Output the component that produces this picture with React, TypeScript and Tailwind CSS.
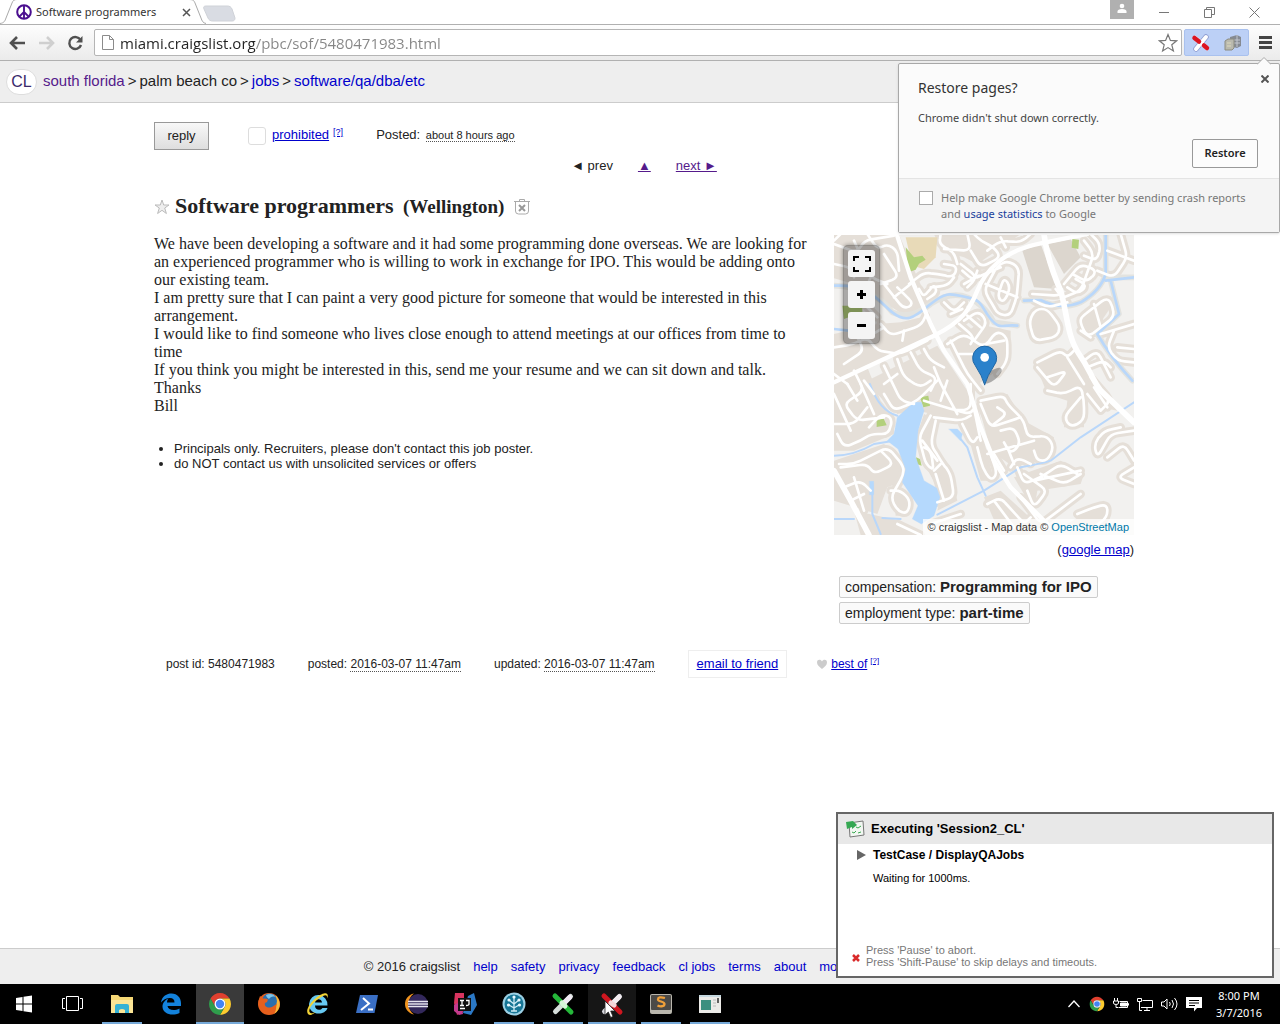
import type { ReactNode } from "react";

const link = "text-[#0000cc]";

/* ---------- browser chrome ---------- */

function PeaceIcon() {
  return (
    <svg viewBox="0 0 16 16" className="size-4 shrink-0" aria-hidden="true">
      <circle cx="8" cy="8" r="6.8" fill="#fff" stroke="#4b0f8f" strokeWidth="2" />
      <path d="M8 1v14M8 8 3.3 12.7M8 8l4.700 4.700" fill="none" stroke="#4b0f8f" strokeWidth="1.900" />
    </svg>
  );
}

function TabStrip() {
  return (
    <div className="flex h-6 items-end justify-between bg-white">
      <div className="flex">
        <div className="relative z-10 flex h-[25px] w-[206px] items-center gap-1 pt-px pr-3 pl-4">
          <svg viewBox="0 0 206 25" preserveAspectRatio="none" className="absolute inset-0 size-full" aria-hidden="true">
            <path d="M0 24.500C4 24 5 22 6 19L12 4C13 1.500 14 .5 17 .5H189C193 .5 194 1.500 195 4L201 19C202 22 203 24 206 24.500" fill="#fff" stroke="#a9a9a9" />
          </svg>
          <div className="relative flex w-full items-center gap-1">
            <PeaceIcon />
            <span className="flex-1 font-['Noto_Sans'] text-[11px] leading-4 whitespace-nowrap text-[#333]">Software programmers</span>
            <button type="button" aria-label="Close tab" className="mr-[3px] text-[#555]">
              <svg viewBox="0 0 9 9" className="size-[9px]"><path d="m1 1 7 7M8 1 1 8" stroke="currentColor" strokeWidth="1.500" /></svg>
            </button>
          </div>
        </div>
        <button type="button" aria-label="New tab" className="mt-1 -ml-1">
          <svg viewBox="0 0 34 17" className="h-[17px] w-[34px]"><path d="M4 1h21c3 0 4 1 5 3l3 9c0 2-1 3-3 3H11c-3 0-4-1-5-3L2 4c-1-2 0-3 2-3Z" fill="#d9dce3" stroke="#cfd2d8" /></svg>
        </button>
      </div>
      <div className="flex h-full items-start text-[#777]">
        <button type="button" aria-label="User" className="mr-[25px] flex h-[19px] w-6 justify-center bg-[#b0b0b0] pt-[3px]">
          <svg viewBox="0 0 12 11" className="h-[11px] w-3" fill="#fff"><circle cx="6" cy="3" r="2.300" /><path d="M1.500 10V8.500Q1.500 6 6 6t4.500 2.500V10Z" /></svg>
        </button>
        <button type="button" aria-label="Minimize" className="mt-[7px] mr-[34px]">
          <svg viewBox="0 0 11 11" className="size-[11px]"><path d="M0 5.500h10" stroke="currentColor" /></svg>
        </button>
        <button type="button" aria-label="Restore window" className="mt-[7px] mr-[34px]">
          <svg viewBox="0 0 11 11" className="size-[11px]" fill="none" stroke="currentColor"><path d="M.5 2.500h7v8h-7zM2.500 2.500v-2h8v7h-3" /></svg>
        </button>
        <button type="button" aria-label="Close window" className="mt-[7px] mr-5">
          <svg viewBox="0 0 11 11" className="size-[11px]"><path d="m.5.5 10 10M10.500.5l-10 10" stroke="currentColor" /></svg>
        </button>
      </div>
    </div>
  );
}

function Toolbar() {
  return (
    <div className="flex h-[37px] items-center border-t border-b border-[#b0b0b0] bg-linear-to-b from-[#fdfdfd] to-[#ebebeb] pr-2 pl-[9px]">
      <button type="button" aria-label="Back" className="mr-3">
        <svg viewBox="0 0 17 16" className="h-4 w-[17px]" fill="none" stroke="#505050" strokeWidth="2.600"><path d="M8 2 2 8l6 6M2 8h14" /></svg>
      </button>
      <button type="button" aria-label="Forward" className="mr-3">
        <svg viewBox="0 0 17 16" className="h-4 w-[17px]" fill="none" stroke="#cfcfcf" strokeWidth="2.600"><path d="m9 2 6 6-6 6M15 8H1" /></svg>
      </button>
      <button type="button" aria-label="Reload" className="mr-2.5">
        <svg viewBox="0 0 17 16" className="h-4 w-[17px]"><path d="M13.500 5A6 6 0 1 0 14 10" fill="none" stroke="#505050" strokeWidth="2.400" /><path d="M15.500 1v6.500H9Z" fill="#505050" /></svg>
      </button>
      <div className="flex h-[27px] flex-1 items-center rounded-[2px] border border-[#b5b5b5] bg-white pr-[3px] pl-[7px]">
        <svg viewBox="0 0 12 15" className="mr-[6px] h-[15px] w-3 shrink-0" fill="#fff" stroke="#8b8b8b"><path d="M.5.5h7l4 4v10H.5ZM7.500.5v4h4" /></svg>
        <input
          aria-label="Address"
          defaultValue="miami.craigslist.org/pbc/sof/5480471983.html"
          className="min-w-0 flex-1 bg-[linear-gradient(90deg,#222_0_136px,#858585_136px)] bg-clip-text font-['Open_Sans'] text-[15px] leading-6 text-transparent outline-none"
        />
        <button type="button" aria-label="Bookmark">
          <svg viewBox="0 0 20 20" className="size-5" fill="#fff" stroke="#777" strokeWidth="1.200"><path d="m10 1.500 2.400 5.900 6.200.4-4.800 4 1.600 6.200L10 14.600 4.600 18l1.600-6.200-4.800-4 6.200-.4Z" /></svg>
        </button>
      </div>
      <div className="ml-0.5 flex h-[27px] w-[65px] items-center justify-between rounded-[2px] border border-[#a9c1ee] bg-[#bcd0f6] px-[6px]">
        <button type="button" aria-label="Red test extension">
          <svg viewBox="0 0 20 18" className="h-[18px] w-5" strokeLinecap="round"><path d="m15 3-5 6-5 6" stroke="#8d9bd0" strokeWidth="5.500" fill="none" /><path d="m15 3-10 12" stroke="#fff" strokeWidth="4" /><path d="m4 4 12 10" stroke="#fff" strokeWidth="4.500" /><path d="m3.500 4 4.500 3.600M13 11.500l3 2.500" stroke="#dc1420" strokeWidth="4.500" /></svg>
        </button>
        <button type="button" aria-label="Page extension">
          <svg viewBox="0 0 18 18" className="size-[18px]"><path d="m6 3 7-2 4 2v9l-4 2-7-2Z" fill="#858a92" /><path d="M7 6h9M7 9h9M13 1v12" stroke="#c3c7cf" /><path d="m1 7 3-2h6v9l-2 2H1Z" fill="#b9b9ae" stroke="#8c8c80" /><path d="M3 9h4M3 12h4" stroke="#ddd9bd" /></svg>
        </button>
      </div>
      <button type="button" aria-label="Menu" className="ml-2.5">
        <svg viewBox="0 0 13 13" className="size-[13px]" stroke="#444" strokeWidth="3"><path d="M0 1.500h13M0 6.500h13M0 11.500h13" /></svg>
      </button>
    </div>
  );
}

function RestoreBubble() {
  return (
    <section aria-label="Restore pages" className="absolute top-[63px] right-0 z-20 w-[382px] rounded-[2px] border border-[#a8a8a8] bg-[#fbfbfb] font-['Noto_Sans'] shadow-sm">
      <svg viewBox="0 0 14 8" className="absolute -top-[7px] right-2 h-2 w-3.5"><path d="m0 7.500 7-7 7 7" fill="#fbfbfb" stroke="#a8a8a8" /></svg>
      <button type="button" aria-label="Dismiss" className="absolute top-[11px] right-2.5">
        <svg viewBox="0 0 8 8" className="size-2"><path d="m.5.5 7 7M7.500.5l-7 7" stroke="#555" strokeWidth="2" /></svg>
      </button>
      <div className="flex flex-col px-[19px] pt-3.5 pb-2.5">
        <h2 className="text-[14px] leading-5 text-[#333]">Restore pages?</h2>
        <p className="mt-3 text-[11px] leading-4 text-[#444]">Chrome didn't shut down correctly.</p>
        <button type="button" className="mt-[13px] mr-0.5 h-[29px] w-[66px] self-end rounded-[2px] border border-[#999] bg-[#fcfcfc] text-[11px] font-semibold text-[#222]">Restore</button>
      </div>
      <div className="flex items-start gap-2 border-t border-[#e4e4e4] bg-[#f4f4f4] px-5 pt-[11px] pb-[10px] text-[11px] leading-4 text-[#777]">
        <input id="crash" type="checkbox" className="mt-px size-3.5 shrink-0 appearance-none border border-[#aaa] bg-white" />
        <label htmlFor="crash" className="whitespace-nowrap">
          Help make Google Chrome better by sending crash reports
          <br />
          and <a href="#stats" className="text-[#1a3f9c]">usage statistics</a> to Google
        </label>
      </div>
    </section>
  );
}

/* ---------- map ---------- */

const residential = [
  "M-10 40V130L60 150L190 230L215 250L285 205L250 130L190 -10H0Z",
  "M300 0H560L430 90L390 70L320 50Z",
  "M0 300L130 270L200 265L280 245L310 300L0 440Z",
  "M100 440L310 335L400 470L450 620L480 740L440 740L390 560L250 530L190 540L120 470Z",
  "M0 430L100 400L140 500L180 550V600L60 650L0 650Z",
  "M0 680L150 630L210 680L215 740L160 760L130 840L0 800Z",
  "M175 750L230 820L220 845H185Z",
  "M270 540L310 560L290 620L350 700L370 800L310 830L320 780L260 670L250 600Z",
  "M350 330L430 270L530 290V380L420 460L380 400Z",
  "M430 500L520 480L570 560L660 610L650 670L540 700L470 650Z",
  "M590 225L640 225L680 290L660 320L600 325Z",
  "M600 380L720 345L800 460L850 530L800 520L750 490V580H690L700 500L640 480Z",
  "M740 250L830 185L830 220L790 280L740 300Z",
  "M450 790L500 770L620 880L580 903H500Z",
  "M540 730L680 680L750 720L740 750L610 770L600 830Z",
  "M60 830L200 860L260 903H80Z",
  "M700 870L810 800L830 840L790 880Z",
];

const streets = [
  "M0 30 70 55 90 20 180 5M100 0 130 45 160 30 190 50 195 110M20 0 0 20M60 20 110 130 160 150M0 90 50 100 60 130M110 130 80 200 130 250M150 60 195 130 140 150M190 160 240 210 210 225 150 150M230 150 180 190",
  "M320 0 315 30 360 55 370 90M330 45 410 50 400 0M410 50 440 100 500 70 480 40 440 20 420 0M460 50 500 20 560 25 590 0M500 10 515 40",
  "M225 150 270 115 310 120 360 130 370 95 330 90M255 165 270 190 300 150 310 175 280 195M290 160 340 155 360 130",
  "M385 110 420 140 430 110M380 90 430 130 400 160M390 150 435 125M330 205 360 235 390 205M350 240 385 225",
  "M490 95 450 170 475 210 490 240 530 245 550 180 555 100 520 80ZM510 130 490 190 510 205 530 160ZM455 150 550 190M430 130 500 100",
  "M595 180 680 185 665 165M600 200 640 220 700 205M690 190 740 170 780 60 750 20M700 160 730 180 760 155 725 135M715 120 760 145 790 110 740 90 690 150M750 65 790 80 800 30 770 0M790 110 840 130 880 70 860 0M820 50 900 80",
  "M605 225 585 260 600 320 665 310 680 280 640 225ZM740 250 820 190 835 215 840 250 760 310 740 270ZM780 210 800 280M740 290 770 310",
  "M800 300 900 270M840 290 820 340 850 380 900 385M850 340 900 345",
  "M0 340 60 330 100 310 130 350 200 360 280 320M30 390 90 350 60 290M140 270 170 305 260 275 275 245M210 290 205 320M100 310 150 280M0 420 40 450M60 410 90 470 30 510 70 560 150 550M90 440 120 480M0 570 60 570 100 520M10 600 30 640 80 620 110 600 165 600 175 550 140 540 105 580",
  "M150 395 200 500 240 510M190 375 210 430 260 460 290 440M230 355 260 410 310 430 290 470M270 345 290 380 330 400M150 450 190 420M300 400 320 450 370 540M150 480 180 530 250 500 310 440M270 500 370 530 410 525 410 450M320 500 340 440",
  "M350 320 400 420 440 470M375 270 420 310 410 330M390 260 435 230 460 265 420 320M400 245 440 280M340 330 390 300 450 340 490 290 520 310 520 380 490 420M455 330 510 320M370 360 430 360",
  "M370 530 410 540 420 520 440 620M300 550 380 560 410 545M385 570 415 630 430 610M440 500 510 485 520 510 570 560 580 610 640 605 660 640 640 680 610 680 600 650M440 510 470 580 560 550M490 520 520 540 480 570M500 590 540 580 560 630 530 660 510 625M460 660 600 620M530 700 550 670 590 690M520 640 540 690",
  "M430 640 445 700 470 740 490 720 470 660M480 660 510 710",
  "M290 545 255 610 275 690 300 710 290 650 270 640M305 560 290 630 320 680 350 720 360 790 310 805M265 620 310 680M300 710 320 690M305 720 330 800",
  "M15 690 60 690 160 640 205 690 210 720 170 790 190 830 220 840 230 800 200 770 170 770M20 700 100 690 120 720 180 690 140 650M60 730 90 830M30 760 80 740 110 770M50 800 90 780",
  "M0 480 50 590M80 450 120 540M40 450 70 500",
  "M610 385 680 350 700 370 720 350M610 400 660 460 700 410 640 430M700 370 750 450M750 380 790 350 830 430M760 400 810 380 830 400",
  "M640 470 690 480 740 455 750 500 750 560 710 580 690 550 740 490M760 480 800 530M780 460 820 520M800 530 830 500 770 430",
  "M900 590 830 600 790 670 780 630 810 590 860 580M820 670 870 630 900 680M900 700 850 730 900 750",
  "M460 810 500 790 570 870 590 850M480 800 540 880M550 700 570 750 620 730 680 690 730 720M570 720 640 770 600 820 580 770M620 720 690 750 740 720M600 740 740 710M560 790 620 870 740 780",
  "M730 840 780 820 820 810 820 850 780 880M190 870 260 903M290 870 380 840",
];

type Point = [number, number];

/* Moves from one point towards another, at most half of the way. */
function towards([ax, ay]: Point, [bx, by]: Point, distance: number): Point {
  const length = Math.hypot(bx - ax, by - ay) || 1;
  const t = Math.min(distance / length, 0.5);
  return [Math.round(ax + (bx - ax) * t), Math.round(ay + (by - ay) * t)];
}

/* Turns "M x y x y ..." polylines into paths with rounded bends. */
function rounded(path: string, radius = 22): string {
  return path
    .split("M")
    .filter(Boolean)
    .map((part) => {
      const closed = part.endsWith("Z");
      const n = (part.match(/-?[\d.]+/g) ?? []).map(Number);
      const points: Point[] = [];
      for (let i = 0; i + 1 < n.length; i += 2) points.push([n[i], n[i + 1]]);
      const count = points.length;
      const first = closed ? towards(points[0], points[1], radius) : points[0];
      let out = `M${first.join(" ")}`;
      for (let i = 1; i < (closed ? count + 1 : count - 1); i++) {
        const corner = points[i % count];
        const before = towards(corner, points[(i - 1) % count], radius);
        const after = towards(corner, points[(i + 1) % count], radius);
        out += `L${before.join(" ")}Q${corner.join(" ")} ${after.join(" ")}`;
      }
      return closed ? `${out}Z` : `${out}L${points[count - 1].join(" ")}`;
    })
    .join("");
}

const roads = streets.map((d) => rounded(d));

function MapPicture() {
  return (
    <svg viewBox="0 3 900 900" className="block w-full" role="img" aria-label="Street map" fill="none" strokeLinejoin="round" strokeLinecap="round">
      <rect y="0" width="900" height="903" fill="#f2f1ef" />
      <g fill="#e5dfd8">{residential.map((d) => <path key={d} d={d} />)}</g>
      <path d="M565 50 620 30Q650 110 670 165L600 160ZM640 30 710 15 740 70 690 120Z" fill="#dcd6ce" />
      <g stroke="#e5dfd8" strokeWidth="26">{roads.map((d) => <path key={d} d={d} />)}</g>
      <path d="M215 10H310L305 70 270 105 235 95Z" fill="#e8dab8" />
      <path d="m215 40 25 30 25-5 10 12-20 12-10 18-22 8ZM715 15l20 2-2 28-20-4ZM25 215h60v20l-55 20ZM128 560l20-8 10 22-30 5ZM258 490l25-5 5 30-20 5ZM246 670l12 5 5 20-15-5Z" fill="#b3d07c" />
      <g stroke="#fff" strokeWidth="17">
        <path d="M0 155Q120 160 175 235 230 260 290 210 350 170 400 190 450 210 480 265L550 275M570 200 620 198Q680 230 740 205 800 170 815 120V0M815 130H900M830 140Q845 200 855 240L790 300Q830 370 895 440" stroke="#e3e3df" />
      </g>
      <g stroke="#b9d7fa" strokeWidth="8">
        <path d="M0 155C110 150 130 200 175 235S240 250 290 210 350 180 400 190 440 220 470 255 500 270 550 275M570 200 620 198Q680 230 740 205 800 170 815 120V0M815 140 900 130M830 140Q845 200 855 240L790 300Q830 370 895 440M0 285 45 290" />
        <path d="M108 450Q135 530 190 545M0 665Q60 665 120 630L180 620M310 842 450 770 560 700Q620 690 650 680L740 610 900 505M360 590 400 640 430 730 455 785M115 750V840L140 900M0 855H60M145 852 200 855" strokeWidth="6" />
      </g>
      <path d="M190 550 240 505 262 505 270 530 252 590 245 670 270 740 308 762 318 790 300 845 262 870 235 855 252 815 205 745 215 705 192 645 160 620 180 600ZM345 585l25 0 15 15-5 20ZM107 742h12v40h-12Z" fill="#b5d9fd" stroke="#b5d9fd" />
      <g stroke="#fff" strokeWidth="8">{roads.map((d) => <path key={d} d={d} />)}</g>
      <g stroke="#fff" strokeWidth="13">
        <path d="M0 445Q150 375 300 305C390 260 410 220 430 170S500 50 620 28L760 0M188 0 230 130 290 270 330 350 400 450 440 580 480 680 530 760 640 870" />
        <path d="M0 710 50 800 105 903M630 0Q640 80 680 170C700 240 700 310 735 360S770 430 800 470L900 565" strokeWidth="17" />
      </g>
      <ellipse cx="475" cy="425" rx="34" ry="14" transform="rotate(-38 475 425)" fill="#555" fillOpacity=".45" />
      <path d="M452 452Q444 425 424 395A36 36 0 1 1 480 395Q460 425 452 452Z" fill="#2a81cb" stroke="#2268a5" strokeWidth="3" />
      <circle cx="452" cy="370" r="13" fill="#fff" />
    </svg>
  );
}

function MapControl({ label, children }: { label: string; children: ReactNode }) {
  return (
    <button type="button" aria-label={label} className="flex size-[27px] items-center justify-center rounded-[3px] bg-[#f4f4f4]">
      {children}
    </button>
  );
}

function MapPanel() {
  return (
    <div className="relative">
      <MapPicture />
      <div className="absolute top-2.5 left-[9px] flex flex-col gap-1 rounded-[5px] border border-black/10 bg-black/30 p-1 shadow-[0_0_4px_rgba(0,0,0,0.4)]">
        <MapControl label="Full screen">
          <svg viewBox="0 0 18 16" className="h-4 w-[18px]" fill="none" stroke="#000" strokeWidth="2"><path d="M1 5V1h5M12 1h5v4M17 11v4h-5M6 15H1v-4" /></svg>
        </MapControl>
        <MapControl label="Zoom in">
          <svg viewBox="0 0 9 9" className="size-[9px]" stroke="#000" strokeWidth="3"><path d="M0 4.500h9M4.500 0v9" /></svg>
        </MapControl>
        <MapControl label="Zoom out">
          <svg viewBox="0 0 9 9" className="size-[9px]" stroke="#000" strokeWidth="3"><path d="M0 4.500h9" /></svg>
        </MapControl>
      </div>
      <p className="absolute right-0 bottom-0 bg-white/75 px-[5px] text-[11px] leading-4 whitespace-nowrap text-[#333]">
        © craigslist - Map data © <a href="#osm" className="text-[#0078a8]">OpenStreetMap</a>
      </p>
    </div>
  );
}

/* ---------- posting ---------- */

function Posting() {
  return (
    <main className="flex-1 pt-[19px] pl-2 text-[13px] text-[#222]">
      <div className="mx-auto max-w-[980px]">
        <div className="flex items-center">
          <button type="button" className="h-7 w-[55px] border border-[#999] bg-linear-to-b from-[#f8f8f8] to-[#dedede]">reply</button>
          <div className="ml-[39px] flex items-center gap-[6px] leading-4">
            <input id="flag" type="checkbox" className="size-[18px] appearance-none rounded-[3px] border border-[#ddd] bg-white" />
            <label htmlFor="flag" className="pb-0.5"><a href="#prohibited" className={`${link} underline`}>prohibited</a></label>
            <a href="#help" className={`${link} mb-2 -ml-0.5 text-[9px] leading-3 underline`}>[?]</a>
          </div>
          <p className="ml-[33px] pb-0.5 leading-4">
            Posted: <time className="ml-0.5 border-b border-dotted border-[#555] text-[11px]">about 8 hours ago</time>
          </p>
        </div>
        <nav className="mt-2 flex justify-center gap-[25px] leading-4">
          <span>◄ prev</span>
          <a href="#up" className="text-[#551a8b] underline">▲</a>
          <a href="#next" className="text-[#551a8b] underline">next ►</a>
        </nav>

        <h1 className="mt-[18px] flex items-center font-['Liberation_Serif'] text-[22px] leading-7 font-bold">
          <button type="button" aria-label="Save posting" className="mr-[5px]">
            <svg viewBox="0 0 16 16" className="size-4" fill="#eee" stroke="#bbb"><path d="m8 1 1.700 5H15l-4.300 3 1.700 5.500L8 11.300l-4.400 3.200L5.300 9 1 6h5.300Z" /></svg>
          </button>
          <span>Software programmers <small className="ml-1 text-[19px]">(Wellington)</small></span>
          <button type="button" aria-label="Hide posting" className="ml-2.5">
            <svg viewBox="0 0 16 16" className="size-4" fill="none" stroke="#aaa"><path d="M0 2.500h16M5.500 2V.5h5V2M1.500 3v9q0 3 3 3h7q3 0 3-3V3" /><path d="m5 6 6 6M11 6l-6 6" stroke="#999" strokeWidth="2" /></svg>
          </button>
        </h1>

        <div className="mt-3.5 flex gap-6">
          <div className="min-w-0 flex-1">
            <p className="font-['Liberation_Serif'] text-[16px] leading-[18px]">
              We have been developing a software and it had some programming done overseas. We are looking for an experienced programmer who is willing to work in exchange for IPO. This would be adding onto our existing team.
              <br />
              I am pretty sure that I can paint a very good picture for someone that would be interested in this arrangement.
              <br />
              I would like to find someone who lives close enough to attend meetings at our offices from time to time
              <br />
              If you think you might be interested in this, send me your resume and we can sit down and talk.
              <br />
              Thanks
              <br />
              Bill
            </p>
            <ul className="mt-[26px] list-disc pl-5 leading-[15px]">
              <li>Principals only. Recruiters, please don't contact this job poster.</li>
              <li>do NOT contact us with unsolicited services or offers</li>
            </ul>
          </div>
          <aside className="w-[300px] shrink-0">
            <MapPanel />
            <p className="mt-[7px] text-right leading-4">(<a href="#gmap" className={`${link} underline`}>google map</a>)</p>
            <div className="mt-[18px] flex flex-col items-start gap-1 pl-[5px] text-[14px] leading-5">
              <p className="rounded-[2px] border border-[#ccc] bg-[#fafafa] px-[5px]">compensation: <b className="text-[15px]">Programming for IPO</b></p>
              <p className="rounded-[2px] border border-[#ccc] bg-[#fafafa] px-[5px]">employment type: <b className="text-[15px]">part-time</b></p>
            </div>
          </aside>
        </div>

        <div className="mt-[26px] flex items-center gap-[33px] pl-3 text-[12px] leading-[14px]">
          <span>post id: 5480471983</span>
          <span>posted: <time className="border-b border-dotted border-[#555]">2016-03-07 11:47am</time></span>
          <span>updated: <time className="border-b border-dotted border-[#555]">2016-03-07 11:47am</time></span>
          <span className="border border-[#eee] px-2 py-[6px] text-[13px]"><a href="#email" className={`${link} underline`}>email to friend</a></span>
          <span className="-ml-1 flex items-center gap-[3px]">
            <svg viewBox="0 0 12 10" className="h-2.5 w-3" fill="#ccc"><path d="M6 10C3 7.500 1 6 1 3.200 1 0 5 0 6 2.500 7 0 11 0 11 3.200 11 6 9 7.500 6 10Z" /></svg>
            <a href="#best" className={`${link} underline`}>best of</a>
            <a href="#besthelp" className={`${link} mb-[6px] text-[8px] leading-[10px] underline`}>[?]</a>
          </span>
        </div>
      </div>
    </main>
  );
}

/* ---------- test runner window ---------- */

function RunnerWindow() {
  return (
    <section aria-label="Test run" className="absolute right-[6px] bottom-[46px] z-20 flex h-[166px] w-[438px] flex-col border-2 border-[#666] bg-white text-black">
      <h2 className="flex h-[30px] items-center gap-[6px] bg-[#e8e8e8] pl-2 text-[13px] font-bold">
        <svg viewBox="0 0 19 18" className="h-[18px] w-[19px]"><path d="m3 3 14-2 1 14-14 2Z" fill="#f2f7f2" stroke="#777" /><path d="M0 2 7 1l4 4-5 4V7L1 9Z" fill="#35a853" /><path d="m10 7 2 1 3-2M6 12l2 1 2-2M12 13l3-1" stroke="#39a94f" fill="none" /></svg>
        Executing 'Session2_CL'
      </h2>
      <p className="flex items-center gap-[6px] pt-[3px] pl-[18px] text-[12px] leading-4 font-bold">
        <svg viewBox="0 0 11 10" className="h-2.5 w-[11px]"><path d="m1 0 9 5-9 5Z" fill="#666" /></svg>
        TestCase / DisplayQAJobs
      </p>
      <p className="mt-[7px] pl-[35px] text-[11px] leading-4">Waiting for 1000ms.</p>
      <div className="mt-auto flex items-center gap-[6px] pb-2 pl-3.5 text-[11px] leading-3 text-[#777]">
        <svg viewBox="0 0 8 8" className="mt-1 size-2"><path d="m1 1 6 6M7 1 1 7" stroke="#d92b2b" strokeWidth="2.500" /></svg>
        <p>Press 'Pause' to abort.<br />Press 'Shift-Pause' to skip delays and timeouts.</p>
      </div>
    </section>
  );
}

/* ---------- taskbar ---------- */

function ChromeLogo() {
  return (
    <>
      <path d="M2.500 6.500a11 11 0 0 1 19 0H12a5.500 5.500 0 0 0-4.800 8.250Z" fill="#e0402f" />
      <path d="M12 6.500h9.500A11 11 0 0 1 12 23l4.800-8.250A5.500 5.500 0 0 0 12 6.500Z" fill="#fccb2e" />
      <path d="m2.500 6.500 4.700 8.250a5.500 5.500 0 0 0 9.600 0L12 23A11 11 0 0 1 2.500 6.500Z" fill="#2f9e4c" />
      <circle cx="12" cy="12" r="5.500" fill="#fff" />
      <circle cx="12" cy="12" r="4.200" fill="#4384f3" />
    </>
  );
}

const apps: { name: string; state?: "open" | "active" | "hover"; art: ReactNode }[] = [
  { name: "Start", art: <path d="m4 6 6.500-1v6.500H4ZM11.500 4.800 20 3.500v8h-8.500ZM4 12.500h6.500V19L4 18ZM11.500 12.500H20v8l-8.500-1.300Z" fill="#fff" /> },
  { name: "Task view", art: <path d="M5.500 4.500h12v14h-12ZM4 6.500H1.500v10H4M19 6.500h2.500v10H19" fill="none" stroke="#fff" /> },
  { name: "File Explorer", state: "open", art: <><path d="M1 3h7l2 2h13v16H1Z" fill="#f5d775" /><path d="M1 8h22v13H1Z" fill="#fbe596" /><path d="M5 21v-7q0-2 2-2h10q2 0 2 2v7h-4v-3q-3-2-6 0v3Z" fill="#35b2d5" /></> },
  { name: "Edge", art: <path d="M2 10.500C3 4 8 1.500 12.500 1.500 18.500 1.500 22 6 22 11v3H8.500c.5 4 6.500 5.500 12 2.500v4.500C13 24.500 4 22 3.500 15c-.2-4 2.500-7 6-8.500-1 1-1.500 2.500-1.500 4h7.500c0-3-1.500-4.500-4.500-4.500C7 6 4 8 2 10.500Z" fill="#1382dc" /> },
  { name: "Chrome", state: "active", art: <ChromeLogo /> },
  { name: "Firefox", art: <><circle cx="12" cy="12" r="11" fill="#e6601d" /><path d="M19 3.500c5 5 5.500 14-2 18.500 3-5 3-10 0-14Z" fill="#f6b83a" /><circle cx="12.500" cy="9" r="7.500" fill="#2b6fae" /><path d="M9 3c4-2 8-1 9.500 2-3-1-5 0-6.500 2-1-1-3-2-3-4Z" fill="#7cc6ea" /><path d="M1.500 9 3 4l3 2.500q3-.5 5 1L10 10l-2 1c-1 3 2 5 5 4.500 3-.5 4-2 7-4-1 6-7 9-12 7.500S2 13 1.500 9Z" fill="#e6601d" /></> },
  { name: "Internet Explorer", art: <><path d="M3 12a9 9.500 0 0 1 18.500 1.500H9c0 5 5.500 5.500 7.500 2.500h5C19 24 3 24 3 12Zm6-1.500h7C16 6 9 6 9 10.500Z" fill="#67c9f2" /><path d="M2 22C-2 17 10 3 18 1.500c4-1 4.500 2 3 5 .5-3-1-4-4-2.500C9 8 0 18 4.500 21c1.500 1 4-.5 5-1C7 22.500 4 24 2 22Z" fill="#f2d437" /></> },
  { name: "PowerShell", art: <><path d="M5 3h18l-3.500 18H1Z" fill="#3a6fc4" /><path d="m8 6 6 5.500L6 18M13 17.500h5" fill="none" stroke="#fff" strokeWidth="2" /></> },
  { name: "Eclipse", art: <><path d="M10 1.500C-2 4-2 20 10 22.500 3 18 3 6 10 1.500Z" fill="#f0941f" /><circle cx="14" cy="12" r="10" fill="#33285b" /><path d="M4 9.500h20M4 12h20M4 14.500h20" stroke="#e6e4f0" strokeWidth="1.300" /></> },
  { name: "IntelliJ IDEA", art: <><path d="M2 1h9v18L4 23 1 11Z" fill="#d8345f" /><path d="m15 4 6-3 3 12-6 10-8-2Z" fill="#2b78c5" /><path d="m1 13 7-4 2 13-4 1-5-4Z" fill="#c23a8e" /><path d="M5 6h13v13H5Z" fill="#111" /><path d="M7 8.500h4M9 9v4.500M7 13.500h4M13 8.500h3v3.500q0 1.500-3 1.500M7 16.500h5" stroke="#fff" strokeWidth="1.300" fill="none" /></> },
  { name: "Network tool", state: "open", art: <><circle cx="12" cy="12" r="11.500" fill="#9cd0e4" /><circle cx="12" cy="12" r="9.500" fill="#167595" /><path d="M12 5v14M12 12 7 8M12 12l5-4M12 16l-5-3M12 16l5-3M9 19h6" stroke="#cdebf5" strokeWidth="1.300" /><g fill="#e8f8ff"><circle cx="12" cy="5" r="1.600" /><circle cx="7" cy="8" r="1.600" /><circle cx="17" cy="8" r="1.600" /><circle cx="6.500" cy="13" r="1.600" /><circle cx="17.500" cy="13" r="1.600" /></g></> },
  { name: "Green test tool", state: "open", art: <g strokeLinecap="round" strokeWidth="5"><path d="m19.500 4.500-15 15" stroke="#d6dedb" /><path d="m4 4 16 16" stroke="#25b83a" /><path d="M12 12l6.500-6.500" stroke="#f0e9f3" /><path d="m11 11 3 3" stroke="#d6f5d8" /></g> },
  { name: "Red test tool", state: "hover", art: <g strokeLinecap="round" strokeWidth="5"><path d="m19.500 4.500-15 15" stroke="#d8d8de" /><path d="m4 4 16 16" stroke="#cf1720" /><path d="M14 10l5-5" stroke="#f4eef2" /><path d="m11 11 3 2" stroke="#f5d6d8" /></g> },
  { name: "Sublime Text", state: "open", art: <><rect x="1" y="2" width="22" height="20" rx="2" fill="#b9b6ad" /><rect x="2" y="3" width="20" height="15" rx="1" fill="#4c4a47" /><path d="M16 6q-7-2-7 1.500c0 2.500 6.500 1.500 6.500 4.500 0 3-5 2.500-7 1.500" fill="none" stroke="#f0a03a" strokeWidth="2.300" /></> },
  { name: "Desktop program", state: "open", art: <><path d="M1 3h22v18H1Z" fill="#ecebe8" /><path d="M1 3h22v2H1Z" fill="#c5d8df" /><path d="M3 8h10v10H3Z" fill="#3c8f80" /><path d="M15 8h3M15 11h3M15 14h3" stroke="#bbb" /><path d="M20 6v5" stroke="#333" strokeWidth="1.500" /></> },
];

const barColour = { open: "w-10 bg-[#76a9d8]", active: "w-12 bg-[#76a9d8]", hover: "w-12 bg-[#76a9d8]" };
const cellColour = { open: "", active: "bg-[#3a3a3a]", hover: "bg-[#161616]" };

function Taskbar() {
  return (
    <footer className="flex h-10 justify-between bg-black text-white">
      <div className="flex gap-px">
        {apps.map(({ name, state, art }) => (
          <button key={name} type="button" aria-label={name} className={`relative flex h-10 w-12 items-center justify-center ${state ? cellColour[state] : ""}`}>
            <svg viewBox="0 0 24 24" className="size-6">{art}</svg>
            {state && <span className={`absolute bottom-0 h-0.5 ${barColour[state]}`} />}
            {state === "hover" && (
              <svg viewBox="0 0 12 19" className="absolute top-4 left-4 h-[19px] w-3"><path d="M1 1v14l3.300-3 2.400 5.500 2.300-1L6.700 11H11Z" fill="#fff" stroke="#222" strokeWidth=".8" /></svg>
            )}
          </button>
        ))}
      </div>
      <div className="flex items-center gap-2 pr-4">
        <button type="button" aria-label="Show hidden icons"><svg viewBox="0 0 14 14" className="size-3.5"><path d="m1.500 10 5.500-6 5.500 6" fill="none" stroke="#fff" strokeWidth="1.300" /></svg></button>
        <svg viewBox="0 0 24 24" className="size-4"><ChromeLogo /></svg>
        <svg viewBox="0 0 16 14" className="h-3.5 w-4" fill="none" stroke="#fff"><path d="M6.500 4.500h8v6h-9M15 6.500h.5v2M1.500 1v3M4.500 1v3M.5 4h5v2q0 1.500-2.500 1.500T.5 6ZM3 8v2.500h2" /><path d="M7.500 6h6v3h-6Z" fill="#fff" /></svg>
        <svg viewBox="0 0 16 14" className="h-3.5 w-4" fill="none" stroke="#fff"><path d="M5.500 3.500h10v7H4M7 13.500h6M10 10.500v3M.5 1.500h4v3h-4ZM2.500 5v8.500H5" /></svg>
        <svg viewBox="0 0 17 14" className="h-3.5 w-[17px]" fill="none" stroke="#fff"><path d="M.5 5h2.500l3-3v10l-3-3H.5ZM8.500 5q1.500 2 0 4M11 3q3 4 0 8M13.500 1q5 6 0 12" /></svg>
        <svg viewBox="0 0 16 16" className="size-4"><path d="M0 1h16v11h-5l-3 3.500V12H0Z" fill="#fff" /><path d="M3 4.500h10M3 7h10M3 9.500h6" stroke="#000" /></svg>
        <p className="ml-1 w-[50px] text-center font-['Noto_Sans'] text-[11px] leading-[17px] whitespace-nowrap">8:00 PM<br />3/7/2016</p>
      </div>
    </footer>
  );
}

export default function App() {
  return (
    <div className="relative flex min-h-screen flex-col bg-white font-['Liberation_Sans',sans-serif]">
      <TabStrip />
      <Toolbar />
      <nav className="flex h-[42px] items-center gap-[6px] border-b border-[#ccc] bg-[#eee] pl-[6px] text-[15px] text-[#222]">
        <a href="#home" className="flex h-[26px] w-[31px] items-center justify-center rounded-full border border-[#ddd] bg-white text-[16px] text-[#3b2a6b]">CL</a>
        <p className="flex gap-[3px] whitespace-nowrap">
          <a href="#sfl" className="text-[#551a8b]">south florida</a>
          <span>&gt;</span>
          <span>palm beach co</span>
          <span>&gt;</span>
          <a href="#jobs" className={link}>jobs</a>
          <span>&gt;</span>
          <a href="#sof" className={link}>software/qa/dba/etc</a>
        </p>
      </nav>
      <Posting />
      <div className="flex h-9 items-center justify-center gap-[13px] border-t border-[#ccc] bg-[#eee] text-[13px] text-[#222]">
        <span>© 2016 craigslist</span>
        {["help", "safety", "privacy", "feedback", "cl jobs", "terms", "about", "mobile", "desktop"].map((t) => (
          <a key={t} href={`#${t}`} className={link}>{t}</a>
        ))}
      </div>
      <Taskbar />
      <RestoreBubble />
      <RunnerWindow />
    </div>
  );
}
